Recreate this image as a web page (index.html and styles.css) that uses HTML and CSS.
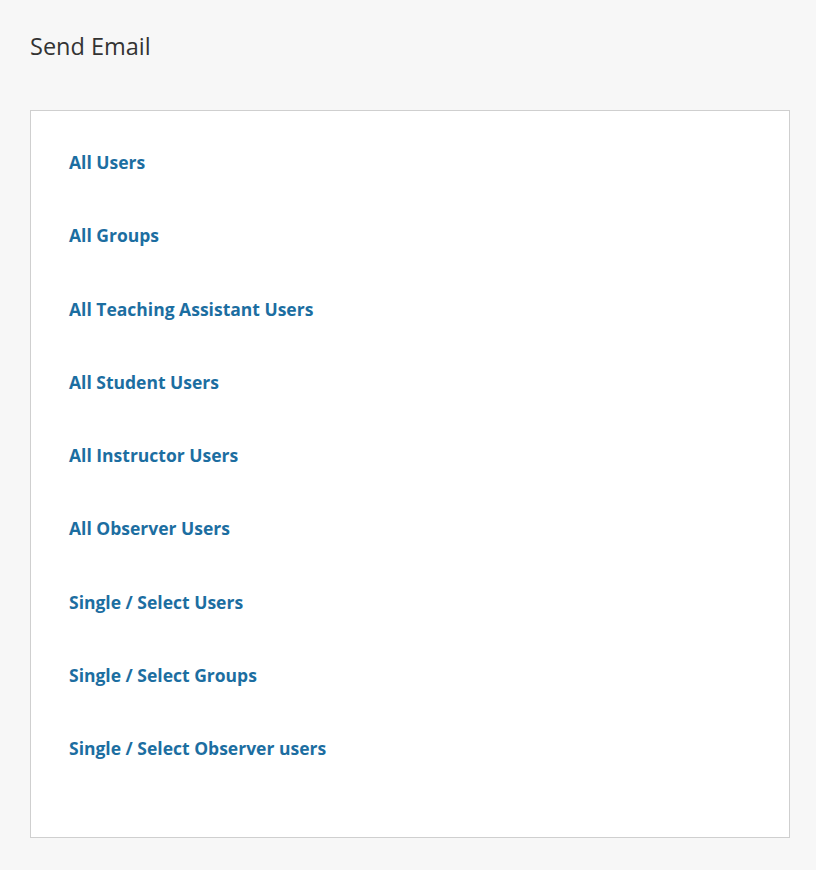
FILE: index.html
```html
<!DOCTYPE html>
<html lang="en">
<head>
    <meta charset="UTF-8">
    <meta name="viewport" content="width=device-width, initial-scale=1.0">
    <title>Send Email</title>
    <link rel="stylesheet" href="styles.css">
</head>
<body>
<div class="page">
    <h1 class="page-title">Send Email</h1>

    <div class="email-panel">
        <ul class="recipient-list">
            <li><a href="#">All Users</a></li>
            <li><a href="#">All Groups</a></li>
            <li><a href="#">All Teaching Assistant Users</a></li>
            <li><a href="#">All Student Users</a></li>
            <li><a href="#">All Instructor Users</a></li>
            <li><a href="#">All Observer Users</a></li>
            <li><a href="#">Single / Select Users</a></li>
            <li><a href="#">Single / Select Groups</a></li>
            <li><a href="#">Single / Select Observer users</a></li>
        </ul>
    </div>
</div>
</body>
</html>
```

FILE: styles.css
```css
:root {
    --link-color: #1c6ea1;
    --panel-border: #cfcfcf;
}

body {
    font-family: 'Open Sans', 'Noto Sans', sans-serif;
    background: #f7f7f7;
    color: #333;
    margin: 0;
}

.page {
    padding: 30px 26px 30px 30px;
}

.page-title {
    font-size: 23.5px;
    font-weight: 400;
    line-height: 33px;
    margin: 0 0 47px;
    color: #333;
}

.email-panel {
    background: #fff;
    border: 1px solid var(--panel-border);
    padding: 39px 38px 28px;
}

.recipient-list {
    list-style: none;
    margin: 0;
    padding: 0;
}

.recipient-list li {
    font-size: 17.5px;
    line-height: 24px;
    margin-bottom: 49.25px;
}

.recipient-list a {
    color: var(--link-color);
    font-weight: 700;
    text-decoration: none;
}

.recipient-list a:hover {
    text-decoration: underline;
}
```
